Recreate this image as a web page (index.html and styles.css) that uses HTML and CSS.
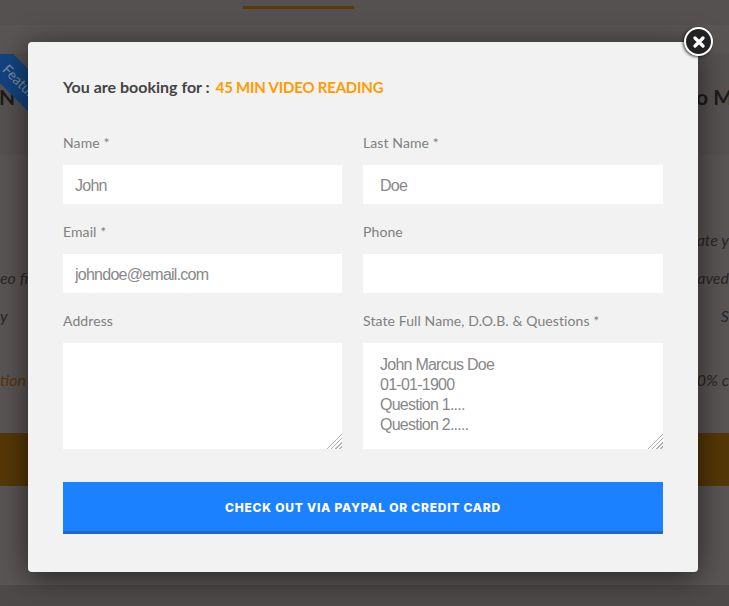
FILE: index.html
```html
<!DOCTYPE html>
<html lang="en">
<head>
  <meta charset="UTF-8">
  <title>Book a reading</title>
  <link rel="stylesheet" href="styles.css">
</head>
<body>

  <div class="page">
    <div class="topbar"><span class="tab-line"></span></div>
    <div class="subbar"></div>

    <div class="plans">
      <div class="ribbon"><span>Featured</span></div>
      <div class="plan-title">
        <span>N</span>
        <span>o M</span>
      </div>
    </div>

    <div class="plan-body">
      <p class="line line-first"><span></span><span>tate y</span></p>
      <p class="line"><span>eo fi</span><span>aved</span></p>
      <p class="line"><span>y</span><span>S</span></p>
      <p class="line line-note"><span>tion</span><span class="line-dark">10% c</span></p>
    </div>

    <div class="cta-band"></div>
    <div class="plan-foot"></div>
    <div class="page-end"></div>
  </div>

  <div class="modal">
    <button class="close-btn" aria-label="Close">
      <svg width="12" height="12" viewBox="0 0 12 12">
        <path d="M2 2 L10 10 M10 2 L2 10" stroke="#fff" stroke-width="3.2" stroke-linecap="round"/>
      </svg>
    </button>

    <h3 class="booking-title">You are booking for : <span>45 MIN VIDEO READING</span></h3>

    <form class="booking-form">
      <div class="field">
        <label for="firstName">Name *</label>
        <input type="text" id="firstName" value="John">
      </div>
      <div class="field field-wide">
        <label for="lastName">Last Name *</label>
        <input type="text" id="lastName" value="Doe">
      </div>
      <div class="field">
        <label for="email">Email *</label>
        <input type="text" id="email" value="johndoe@email.com">
      </div>
      <div class="field field-wide">
        <label for="phone">Phone</label>
        <input type="text" id="phone">
      </div>
      <div class="field">
        <label for="address">Address</label>
        <textarea id="address"></textarea>
      </div>
      <div class="field field-wide">
        <label for="questions">State Full Name, D.O.B. &amp; Questions *</label>
        <textarea id="questions">John Marcus Doe
01-01-1900
Question 1....
Question 2.....</textarea>
      </div>
      <button type="button" class="checkout-btn">CHECK OUT VIA PAYPAL OR CREDIT CARD</button>
    </form>
  </div>

</body>
</html>
```

FILE: styles.css
```css
* {
  margin: 0;
  padding: 0;
  box-sizing: border-box;
}

html, body {
  height: 100%;
  overflow: hidden;
}

body {
  font-family: Lato, sans-serif;
  background: #5b5656;
  position: relative;
}

/* page behind the overlay */
.page {
  height: 606px;
  display: flex;
  flex-direction: column;
}

.topbar {
  height: 25px;
  padding: 6px 0 0 243px;
  background: #565151;
}

.tab-line {
  display: block;
  width: 111px;
  height: 3px;
  background: #5a3a08;
}

.subbar {
  height: 29px;
  background: #5a5555;
}

.plans {
  position: relative;
  height: 101px;
  overflow: hidden;
  background: #575252;
}

.plan-title {
  display: flex;
  justify-content: space-between;
  padding-top: 30px;
  font-size: 21px;
  line-height: 26px;
  font-weight: 700;
  color: #1c1a1a;
}

.plan-title span:first-child {
  margin-left: -1px;
}

.plan-title span:last-child {
  margin-right: -4px;
}

.ribbon {
  position: absolute;
  top: 13px;
  left: -35px;
  width: 110px;
  height: 30px;
  padding-left: 12px;
  background: #13447f;
  transform: rotate(45deg);
  color: #7d8ea8;
  font-size: 14px;
  line-height: 30px;
  text-align: center;
}

.plan-body {
  height: 278px;
  padding-top: 73px;
  background: #5a5555;
}

.line {
  display: flex;
  justify-content: space-between;
  height: 38px;
  font-size: 16px;
  line-height: 24px;
  font-style: italic;
  color: #292626;
}

.line-note {
  margin-top: 26px;
  color: #5a3208;
}

.line-dark {
  color: #292626;
}

.cta-band {
  height: 53px;
  background: #553807;
}

.plan-foot {
  height: 99px;
  background: #5a5555;
}

.page-end {
  flex: 1;
  background: #4f4a4a;
}

/* booking modal */
.modal {
  position: absolute;
  top: 42px;
  left: 28px;
  width: 670px;
  height: 530px;
  padding: 36px 35px 0;
  background: #f2f2f2;
  border-radius: 4px;
  box-shadow: 0 5px 30px rgba(0, 0, 0, 0.6);
}

.close-btn {
  position: absolute;
  top: -15px;
  right: -15px;
  width: 29px;
  height: 29px;
  display: flex;
  justify-content: center;
  align-items: center;
  background: #222;
  border: 2px solid #fff;
  border-radius: 50%;
  box-shadow: -1px 1px 3px rgba(0, 0, 0, 0.7);
}

.booking-title {
  font-size: 16px;
  line-height: 18px;
  font-weight: 700;
  color: #444;
  margin-bottom: 38px;
}

.booking-title span {
  margin-left: 2px;
  font-size: 15px;
  letter-spacing: -0.2px;
  color: #ff9c00;
}

.booking-form {
  display: grid;
  grid-template-columns: 279px 300px;
  column-gap: 21px;
  row-gap: 19px;
}

.field label {
  display: block;
  height: 18px;
  margin-bottom: 13px;
  font-size: 14px;
  line-height: 18px;
  letter-spacing: 0.1px;
  color: #808080;
}

.field input,
.field textarea {
  display: block;
  width: 100%;
  border: none;
  outline: none;
  background: #fff;
  font-family: "Liberation Sans", sans-serif;
  font-size: 16px;
  letter-spacing: -0.75px;
  color: #888;
  padding-left: 12px;
}

.field input {
  height: 39px;
  padding-top: 2px;
}

.field textarea {
  height: 106px;
  line-height: 20px;
  padding-top: 12px;
}

/* lighter grip than the browser default, corner triangle only */
.field textarea::-webkit-resizer {
  background:
    linear-gradient(135deg, #fff 40%, transparent 40%),
    repeating-linear-gradient(135deg, #fff 0 1px, #b0b0b0 1px 2px, #fff 2px 3px);
}

.field-wide input,
.field-wide textarea {
  padding-left: 17px;
}

.checkout-btn {
  grid-column: 1 / -1;
  height: 52px;
  margin-top: 14px;
  padding-top: 2px;
  background: #1c81ff;
  border: none;
  border-bottom: 3px solid #2468bb;
  color: #fff;
  font-family: Inter, sans-serif;
  font-size: 12px;
  font-weight: 800;
  letter-spacing: 0.75px;
}
```
